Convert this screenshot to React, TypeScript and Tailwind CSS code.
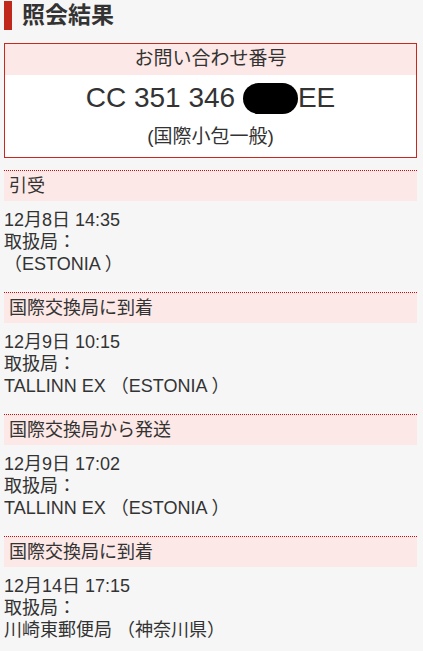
const font = "font-['Liberation_Sans','Noto_Sans_CJK_JP',sans-serif]";

type Event = { status: string; time: string; office: string };

const events: Event[] = [
  { status: "引受", time: "12月8日 14:35", office: "（ESTONIA ）" },
  { status: "国際交換局に到着", time: "12月9日 10:15", office: "TALLINN EX （ESTONIA ）" },
  { status: "国際交換局から発送", time: "12月9日 17:02", office: "TALLINN EX （ESTONIA ）" },
  { status: "国際交換局に到着", time: "12月14日 17:15", office: "川崎東郵便局 （神奈川県）" },
];

function EventBlock({ ev }: { ev: Event }) {
  return (
    <section className="border-t border-dotted border-[#e00000]">
      <h3 className="flex h-[30px] items-center bg-[#fce8e6] pl-[5px] text-[18px] font-normal">{ev.status}</h3>
      <div className="pt-[8px] pb-[17px] text-[18px] leading-[22px]">
        <p>{ev.time}</p>
        <p>取扱局：</p>
        <p>{ev.office}</p>
      </div>
    </section>
  );
}

export default function App() {
  return (
    <div className={`${font} min-h-[651px] bg-[#f6f6f6] pr-[6px] pl-[4px] pt-[1px] text-[#333]`}>
      <h2 className="flex h-[29px] items-center gap-[10px]">
        <span className="h-[29px] w-[8px] bg-[#c0281c]" />
        <span className="text-[23px] font-bold leading-none">照会結果</span>
      </h2>

      <div className="mt-[13px] border border-[#c8281e] bg-white text-center">
        <div className="flex h-[31px] items-center justify-center bg-[#fce8e6] text-[19px]">お問い合わせ番号</div>
        <div className="flex h-[46px] items-center justify-center text-[28px]">
          <span className="whitespace-pre">CC 351 346 </span>
          <span className="inline-block h-[31px] w-[55px] rounded-full bg-black" />
          <span>EE</span>
        </div>
        <p className="mt-[5px] pb-[9px] text-[19px] leading-[22px]">(国際小包一般)</p>
      </div>

      <div className="mt-[12px]">
        {events.map((ev, i) => (
          <EventBlock key={i} ev={ev} />
        ))}
      </div>
    </div>
  );
}
